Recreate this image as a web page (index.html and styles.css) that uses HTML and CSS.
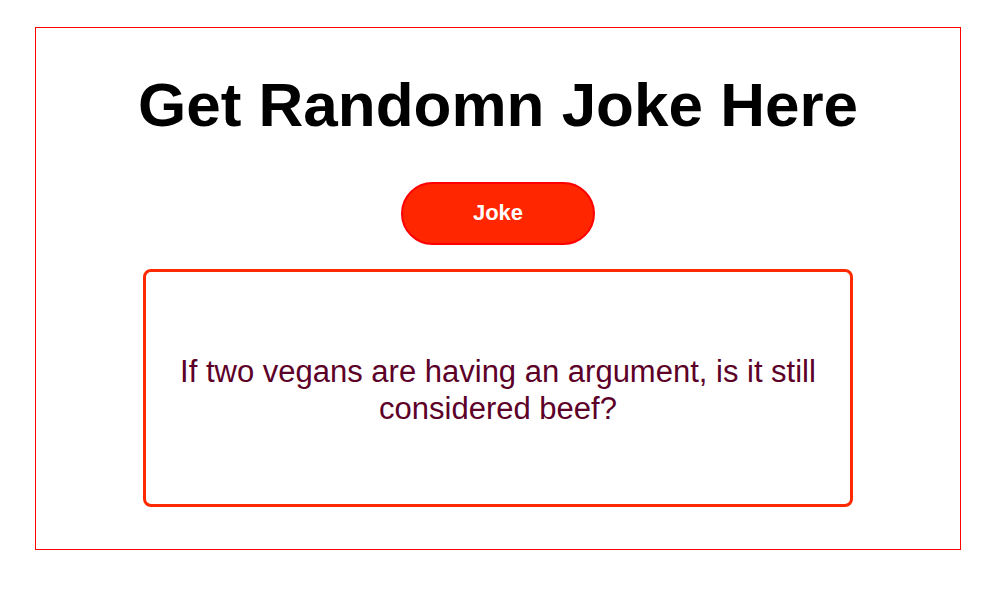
FILE: index.html
```html
<!DOCTYPE html>
<html>
<head>
<meta charset="utf-8">
<link rel="stylesheet" href="styles.css">
</head>
<body>
<main class="card">
  <h1 class="title">Get Randomn Joke Here</h1>
  <button class="joke-btn">Joke</button>
  <div class="joke-box">
    <p class="joke-text">If two vegans are having an argument, is it still considered beef?</p>
  </div>
</main>
</body>
</html>
```

FILE: styles.css
```css
html, body {
  margin: 0;
  padding: 0;
  background: #ffffff;
}
body {
  padding: 27px 0 0 35px;
  font-family: "Liberation Sans", Arial, sans-serif;
}
.card {
  box-sizing: border-box;
  width: 926px;
  height: 523px;
  border: 1px solid #ff0000;
  display: flex;
  flex-direction: column;
  align-items: center;
}
.title {
  margin: 40px 0 0;
  font-size: 62px;
  line-height: 74px;
  font-weight: bold;
  color: #000;
}
.joke-btn {
  box-sizing: border-box;
  margin-top: 40px;
  width: 194px;
  height: 63px;
  border: 2px solid #ff0000;
  border-radius: 32px;
  background: #ff2600;
  color: #ffffff;
  font-family: "Liberation Sans", Arial, sans-serif;
  font-size: 22px;
  font-weight: bold;
  padding: 0 0 2px;
}
.joke-box {
  box-sizing: border-box;
  margin-top: 24px;
  width: 710px;
  height: 238px;
  border: 3px solid #ff2a00;
  border-radius: 8px;
  display: flex;
  align-items: center;
  justify-content: center;
  padding: 3px 30px 0;
}
.joke-text {
  margin: 0;
  text-align: center;
  font-size: 31px;
  line-height: 37px;
  color: #5c0028;
}
```
